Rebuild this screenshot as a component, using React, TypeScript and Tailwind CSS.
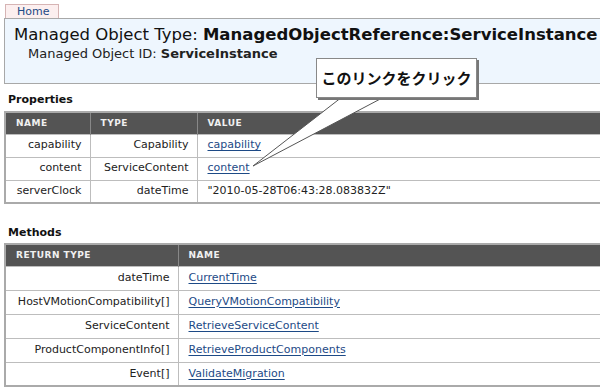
import React from 'react'

const font = { fontFamily: '"DejaVu Sans", Verdana, sans-serif' }

const properties = [
  { name: 'capability', type: 'Capability', value: 'capability', link: true },
  { name: 'content', type: 'ServiceContent', value: 'content', link: true },
  { name: 'serverClock', type: 'dateTime', value: '"2010-05-28T06:43:28.083832Z"', link: false },
]

const methods = [
  { ret: 'dateTime', name: 'CurrentTime' },
  { ret: 'HostVMotionCompatibility[]', name: 'QueryVMotionCompatibility' },
  { ret: 'ServiceContent', name: 'RetrieveServiceContent' },
  { ret: 'ProductComponentInfo[]', name: 'RetrieveProductComponents' },
  { ret: 'Event[]', name: 'ValidateMigration' },
]

const th = 'h-[22px] bg-[#545454] text-[#f0f0f0] text-[9px] font-bold tracking-[0.5px] text-left pl-[10px] border-x border-[#888] align-middle'
const td = 'text-[11px] text-[#222] border border-[#bdbdbd] align-middle'
const link = 'text-[#1d4a86] underline decoration-[#1d4a86] underline-offset-2'

function Callout() {
  return (
    <div className="absolute left-0 top-0 w-[600px] h-[388px] pointer-events-none">
      {/* tail */}
      <svg className="absolute left-0 top-0" width="600" height="388">
        <polygon points="342,97 384,97 253,166" fill="#fff" />
        <line x1="342" y1="97" x2="253" y2="166" stroke="#555" strokeWidth="1" />
        <line x1="384" y1="97" x2="253" y2="166" stroke="#555" strokeWidth="1" />
      </svg>
      <div
        className="absolute left-[316px] top-[58px] w-[161px] h-[40px] bg-white border border-[#888] shadow-[2px_2px_0_#777] flex items-center justify-center text-[15px] font-bold text-[#111]"
        style={{ fontFamily: '"Noto Sans CJK JP", sans-serif' }}
      >
        このリンクをクリック
      </div>
    </div>
  )
}

export default function App() {
  return (
    <div className="relative w-[600px] h-[388px] overflow-hidden bg-white" style={font}>
      {/* Home tab */}
      <div className="ml-[5px] mt-[4px] w-[54px] h-[14px] bg-[#fcefef] border border-b-0 border-[#d6b4b4] text-[11px] leading-[13px] text-[#1d4a86] pl-[11px]">
        Home
      </div>

      {/* header */}
      <div className="ml-[4px] w-[620px] h-[66px] bg-[#eef6fe] border border-[#a8a8a8] pt-[6px] pl-[9px]">
        <div className="text-[16.5px] leading-[20px] text-[#111]">
          Managed Object Type: <span className="font-bold">ManagedObjectReference:ServiceInstance</span>
        </div>
        <div className="text-[13px] leading-[17px] text-[#222] pl-[14px]">
          Managed Object ID: <span className="font-bold">ServiceInstance</span>
        </div>
      </div>

      {/* properties */}
      <div className="ml-[8px] mt-[9px] text-[11px] font-bold text-[#111] leading-[14px]">Properties</div>
      <table className="ml-[4px] mt-[4px] w-[620px] border-collapse border-2 border-[#aaa]">
        <thead>
          <tr>
            <th className={`${th} w-[85px]`}>NAME</th>
            <th className={`${th} w-[107px]`}>TYPE</th>
            <th className={th}>VALUE</th>
          </tr>
        </thead>
        <tbody>
          {properties.map((p) => (
            <tr key={p.name}>
              <td className={`${td} h-[23px] text-right pr-[8px]`}>{p.name}</td>
              <td className={`${td} h-[23px] text-right pr-[8px]`}>{p.type}</td>
              <td className={`${td} h-[23px] pl-[10px]`}>
                {p.link ? <a className={link}>{p.value}</a> : p.value}
              </td>
            </tr>
          ))}
        </tbody>
      </table>

      {/* methods */}
      <div className="ml-[8px] mt-[22px] text-[11px] font-bold text-[#111] leading-[14px]">Methods</div>
      <table className="ml-[4px] mt-[3px] w-[620px] border-collapse border-2 border-[#aaa]">
        <thead>
          <tr>
            <th className={`${th} w-[173px]`}>RETURN TYPE</th>
            <th className={th}>NAME</th>
          </tr>
        </thead>
        <tbody>
          {methods.map((m) => (
            <tr key={m.name}>
              <td className={`${td} h-[24px] text-right pr-[8px]`}>{m.ret}</td>
              <td className={`${td} h-[24px] pl-[10px]`}>
                <a className={link}>{m.name}</a>
              </td>
            </tr>
          ))}
        </tbody>
      </table>

      <Callout />
    </div>
  )
}
